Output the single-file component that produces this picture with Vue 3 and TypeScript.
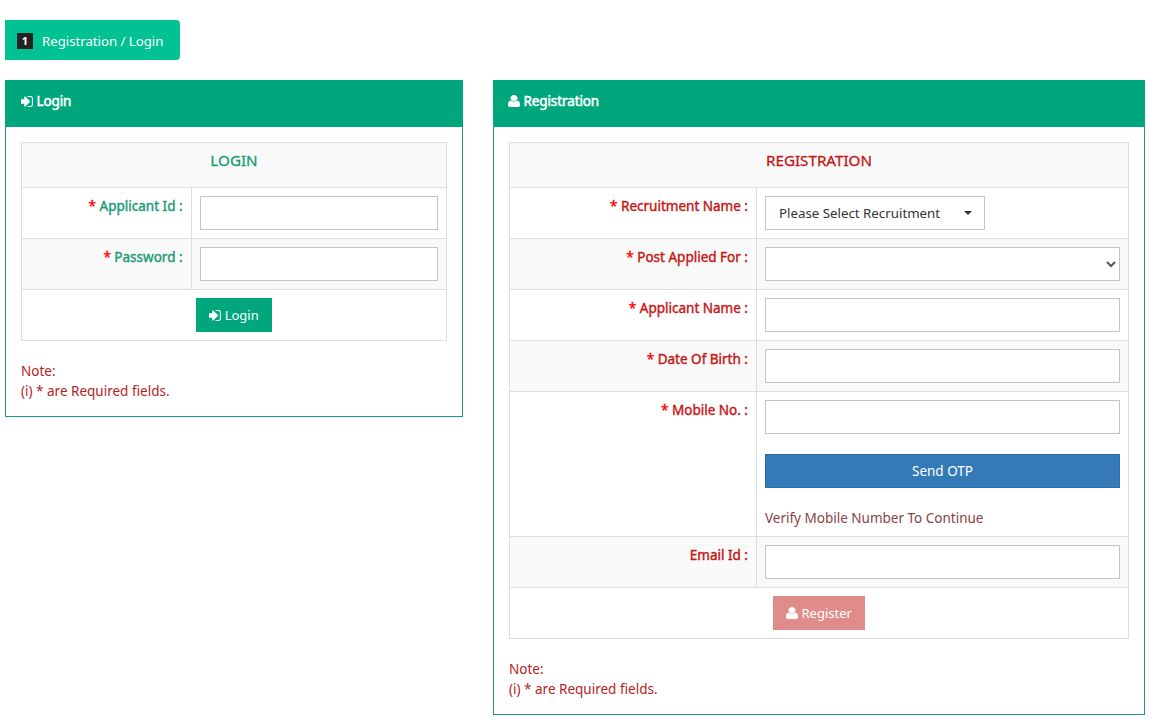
<script setup lang="ts">
const userPath = 'M1536 1399q0 109-62.500 187t-150.500 78h-854q-88 0-150.500-78t-62.500-187q0-85 8.500-160.500t31.500-152 58.500-131 94-89 134.500-34.500q131 128 313 128t313-128q76 0 134.500 34.500t94 89 58.500 131 31.500 152 8.500 160.500zm-256-887q0 159-112.500 271.500t-271.500 112.500-271.500-112.500-112.500-271.500 112.500-271.500 271.500-112.500 271.500 112.500 112.500 271.500z'
const signInPath = 'M1184 896q0 26-19 45l-544 544q-19 19-45 19t-45-19-19-45v-288h-448q-26 0-45-19t-19-45v-384q0-26 19-45t45-19h448v-288q0-26 19-45t45-19 45 19l544 544q19 19 19 45zm352-352v704q0 119-84.500 203.500t-203.500 84.500h-320q-13 0-22.500-9.500t-9.500-22.500q0-4-1-20t-.5-26.500 3-23.500 10-19.500 20.500-6.500h320q66 0 113-47t47-113v-704q0-66-47-113t-113-47h-312l-11.500-1-11.500-3-8-5.500-7-9-2-13.500q0-4-1-20t-.5-26.500 3-23.500 10-19.500 20.500-6.500h320q119 0 203.500 84.500t84.500 203.500z'
const inBox = '128 256 1408 1280'
const userBox = '256 128 1280 1536'
</script>

<template>
  <div class="page">
    <div class="tab"><span class="num">1</span><span>Registration / Login</span></div>
    <div class="panels">
      <section class="panel login">
        <h3 class="heading">
          <svg class="ico" :viewBox="inBox" preserveAspectRatio="none"><path :d="signInPath" /></svg>
          Login
        </h3>
        <div class="body">
          <table class="form green">
            <colgroup><col class="c1" /><col /></colgroup>
            <tbody>
              <tr class="title"><th colspan="2">LOGIN</th></tr>
              <tr>
                <td class="lab"><span class="star">*</span> Applicant Id :</td>
                <td><input class="ctl" type="text" /></td>
              </tr>
              <tr class="alt">
                <td class="lab"><span class="star">*</span> Password :</td>
                <td><input class="ctl" type="password" /></td>
              </tr>
              <tr>
                <td colspan="2" class="act">
                  <button class="btn go">
                    <svg class="ico" :viewBox="inBox" preserveAspectRatio="none"><path :d="signInPath" /></svg>
                    Login
                  </button>
                </td>
              </tr>
            </tbody>
          </table>
          <p class="note">Note:<br />(i) * are Required fields.</p>
        </div>
      </section>

      <section class="panel reg">
        <h3 class="heading">
          <svg class="ico user" :viewBox="userBox" preserveAspectRatio="none"><path :d="userPath" /></svg>
          Registration
        </h3>
        <div class="body">
          <table class="form red">
            <colgroup><col class="c1" /><col /></colgroup>
            <tbody>
              <tr class="title"><th colspan="2">REGISTRATION</th></tr>
              <tr>
                <td class="lab"><span class="star">*</span> Recruitment Name :</td>
                <td>
                  <button class="drop"><span>Please Select Recruitment</span><i class="caret"></i></button>
                </td>
              </tr>
              <tr class="alt">
                <td class="lab"><span class="star">*</span> Post Applied For :</td>
                <td><select class="ctl sel"></select></td>
              </tr>
              <tr>
                <td class="lab"><span class="star">*</span> Applicant Name :</td>
                <td><input class="ctl" type="text" /></td>
              </tr>
              <tr class="alt">
                <td class="lab"><span class="star">*</span> Date Of Birth :</td>
                <td><input class="ctl" type="text" /></td>
              </tr>
              <tr>
                <td class="lab"><span class="star">*</span> Mobile No. :</td>
                <td class="stack">
                  <input class="ctl" type="text" />
                  <button class="otp">Send OTP</button>
                  <div class="verify">Verify Mobile Number To Continue</div>
                </td>
              </tr>
              <tr class="alt">
                <td class="lab">Email Id :</td>
                <td><input class="ctl" type="text" /></td>
              </tr>
              <tr>
                <td colspan="2" class="act">
                  <button class="btn off">
                    <svg class="ico user" :viewBox="userBox" preserveAspectRatio="none"><path :d="userPath" /></svg>
                    Register
                  </button>
                </td>
              </tr>
            </tbody>
          </table>
          <p class="note">Note:<br />(i) * are Required fields.</p>
        </div>
      </section>
    </div>
  </div>
</template>

<style scoped>
.page {
  padding: 20px 30px 0 5px;
  font-family: "Noto Sans", "Open Sans", sans-serif;
  font-size: 13.5px;
  line-height: 20px;
  color: #333;
  background: #fff;
}
.tab {
  width: 175px;
  height: 40px;
  box-sizing: border-box;
  padding: 2px 0 0 12px;
  display: flex;
  align-items: center;
  gap: 9px;
  background: #00c292;
  color: #fff;
  border-radius: 0 4px 4px 0;
  font-size: 13.2px;
}
.num {
  width: 16px;
  height: 16px;
  background: #222;
  color: #fff;
  font-size: 11px;
  font-weight: 700;
  line-height: 16px;
  text-align: center;
}
.panels {
  margin-top: 20px;
  display: flex;
  align-items: flex-start;
  gap: 30px;
}
.panel {
  box-sizing: border-box;
  border: 1px solid #1a9a80;
  background: #fff;
}
.login { width: 458px; }
.reg { width: 652px; }
.heading {
  margin: -1px -1px 0;
  height: 47px;
  box-sizing: border-box;
  padding: 11px 16px;
  background: #00a67c;
  color: #fff;
  font-size: 13.5px;
  font-weight: 400;
  line-height: 20px;
  letter-spacing: -0.1px;
  -webkit-text-stroke: 0.5px #fff;
}
.reg .heading { padding-left: 15px; }
.ico {
  width: 12px;
  height: 11px;
  vertical-align: -1px;
  fill: currentColor;
  stroke: none;
}
.ico.user { height: 12px; }
.body { padding: 15px; }
.form {
  width: 100%;
  table-layout: fixed;
  border-collapse: collapse;
}
.c1 { width: 39.9%; }
.form td,
.form th {
  border: 1px solid #ddd;
  padding: 8px;
  vertical-align: top;
}
.form .lab {
  text-align: right;
  -webkit-text-stroke: 0.4px currentColor;
}
.green .lab, .green th { color: #1a9a76; }
.red .lab, .red th { color: #c41616; }
.form th {
  height: 45px;
  box-sizing: border-box;
  background: #f9f9f9;
  font-size: 15.2px;
  font-weight: 400;
  -webkit-text-stroke: 0.3px currentColor;
  text-align: center;
  vertical-align: top;
  padding: 7px 0 0;
}
.alt td { background: #f9f9f9; }
.star { color: #f00; font-weight: 400; }
.ctl {
  display: block;
  width: 100%;
  height: 34px;
  box-sizing: border-box;
  border: 1px solid #c4c4c4;
  background: #fff;
  padding: 6px 12px;
  font: inherit;
  color: #555;
  border-radius: 0;
}
.sel { padding: 0 8px; }
.drop {
  display: flex;
  align-items: center;
  justify-content: space-between;
  width: 220px;
  height: 34px;
  box-sizing: border-box;
  border: 1px solid #c4c4c4;
  background: #fff;
  padding: 0 12px 0 13px;
  color: #333;
  font: inherit;
  font-size: 13.3px;
  font-weight: 400;
}
.caret {
  width: 0;
  height: 0;
  border-top: 4px solid #333;
  border-left: 4px solid transparent;
  border-right: 4px solid transparent;
}
.stack .otp {
  display: block;
  width: 100%;
  height: 34px;
  margin-top: 20px;
  border: 1px solid #2e6da4;
  background: #337ab7;
  color: #fff;
  font: inherit;
  font-weight: 400;
}
.verify {
  margin-top: 20px;
  color: #8a3f46;
  font-weight: 400;
  height: 20px;
}
.stack { padding-bottom: 8px; }
.act { text-align: center; }
.btn {
  height: 34px;
  padding: 0 12px;
  border: 1px solid transparent;
  color: #fff;
  font: inherit;
  font-size: 13px;
  font-weight: 400;
  display: inline-block;
  vertical-align: top;
}
.go { background: #00a67c; }
.off { background: #e08c8a; border-color: #dd8a88; }
.note {
  margin: 20px 0 0;
  color: #b52222;
  font-weight: 400;
}
</style>
